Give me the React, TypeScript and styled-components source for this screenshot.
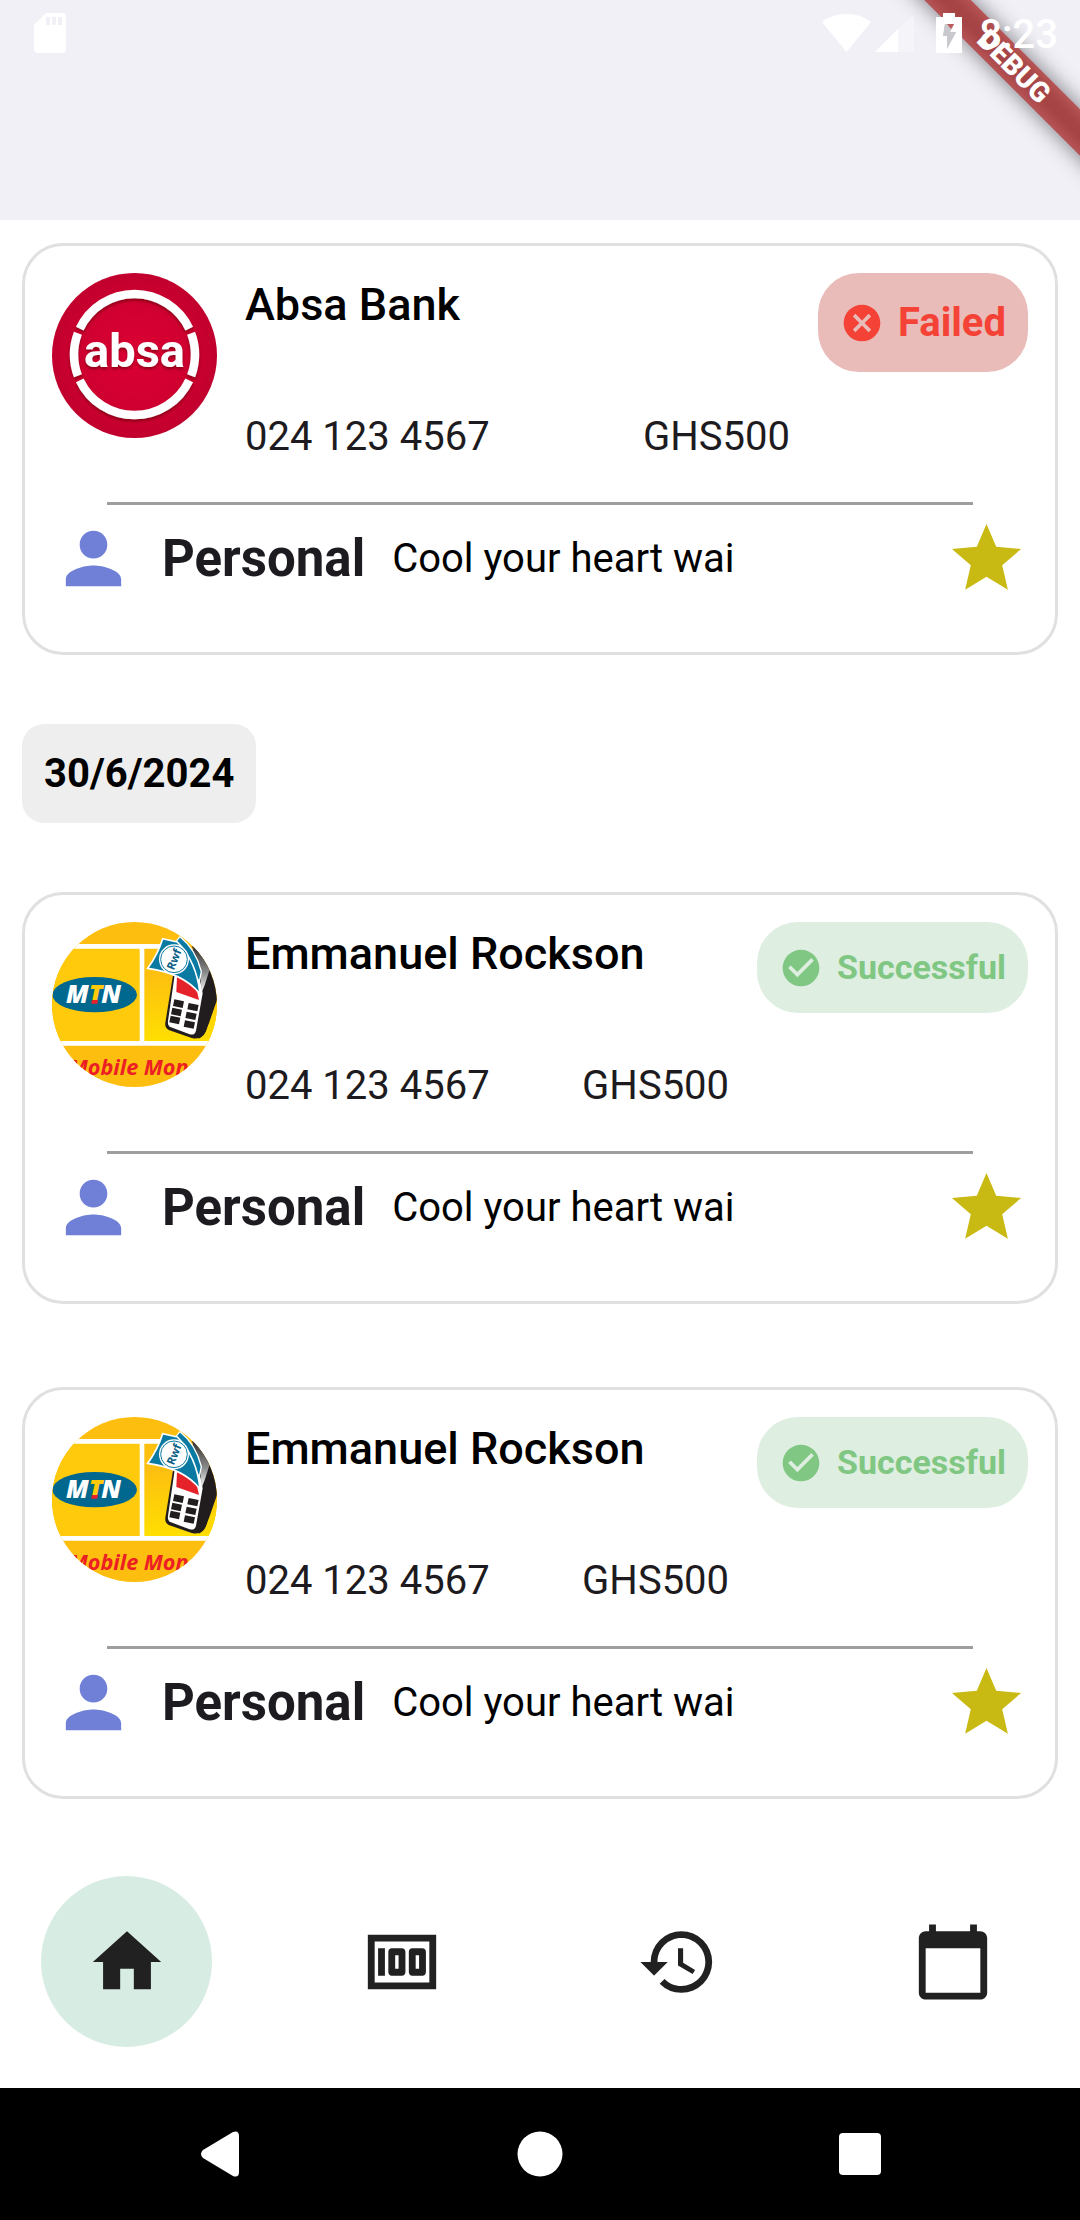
import React from 'react';
import styled, { createGlobalStyle } from 'styled-components';
import {
  MdCalendarToday,
  MdCancel,
  MdCheckCircle,
  MdHistory,
  MdHome,
  MdMoney,
  MdPerson,
  MdStar,
} from 'react-icons/md';

const GlobalStyle = createGlobalStyle`
  *, *::before, *::after { box-sizing: border-box; }
  body {
    margin: 0;
    background: #fff;
    color: #1d1b20;
    font-family: Roboto, "Noto Sans", sans-serif;
    font-size: 40px;
  }
  h2, p { margin: 0; }
  button {
    padding: 0;
    border: 0;
    background: none;
    color: inherit;
    font: inherit;
    cursor: pointer;
  }
  svg { display: block; flex: none; }
`;

const Screen = styled.div`
  display: flex;
  flex-direction: column;
  min-height: 100vh;
`;

const Header = styled.header`
  position: relative;
  height: 220px;
  overflow: hidden;
  background: #f1f0f7;
`;

const StatusBar = styled.div`
  position: relative;
  z-index: 1;
  display: flex;
  align-items: center;
  height: 66px;
  padding: 0 22px 0 34px;
  color: #fff;
`;

const StatusIcons = styled.div`
  display: flex;
  align-items: center;
  margin-left: auto;
`;

const Clock = styled.time`
  margin-left: 17px;
  padding-top: 4px;
  font-weight: 500;
  line-height: 46px;
`;

const DebugRibbon = styled.div`
  position: absolute;
  top: 50px;
  right: -84px;
  width: 300px;
  height: 33px;
  transform: rotate(45deg);
  color: #fff;
  font-size: 28px;
  font-weight: 900;
  line-height: 33px;
  text-align: center;

  &::before,
  &::after {
    content: '';
    position: absolute;
    inset: 0;
    z-index: -1;
  }
  &::before {
    background: rgba(0, 0, 0, 0.5);
    filter: blur(11px);
  }
  &::after {
    background: rgba(183, 28, 28, 0.63);
  }
`;

const History = styled.main`
  flex: 1;
  display: flex;
  flex-direction: column;
  padding: 23px 22px 36px;
`;

const DateChip = styled.p`
  align-self: flex-start;
  margin: 69px 0;
  padding: 0 22px;
  border-radius: 22px;
  background: #eee;
  color: #000;
  font-weight: 700;
  line-height: 99px;
`;

const CardGroup = styled.section`
  display: flex;
  flex-direction: column;
  gap: 83px;
`;

const Card = styled.article`
  padding: 27px 27px 52px;
  border: 3px solid #e0e0e0;
  border-radius: 41px;
`;

const CardTop = styled.div`
  display: flex;
  align-items: flex-start;
  gap: 28px;
`;

const Details = styled.div`
  flex: 1;
  display: flex;
  flex-direction: column;
  gap: 72px;
`;

const Name = styled.h2`
  color: #000;
  font-size: 45px;
  font-weight: 500;
  line-height: 64px;
`;

const Payment = styled.div`
  display: flex;
  justify-content: space-between;
  line-height: 55px;
`;

const Badge = styled.div<{ $failed: boolean }>`
  display: flex;
  align-items: center;
  gap: 14px;
  padding: 0 22px;
  border-radius: 41px;
  background: ${(p) => (p.$failed ? '#e9bbb9' : '#deeee0')};
  color: ${(p) => (p.$failed ? '#f44336' : '#81c784')};
  font-size: ${(p) => (p.$failed ? '40px' : '34px')};
  font-weight: 700;
  line-height: ${(p) => (p.$failed ? '99px' : '91px')};
`;

const Divider = styled.hr`
  height: 3px;
  margin: 38px 55px 12px;
  border: 0;
  background: #9e9e9e;
`;

const CardBottom = styled.div`
  display: flex;
  align-items: center;
`;

const Category = styled.span`
  margin-left: 27px;
  font-size: 51px;
  font-weight: 700;
`;

const Note = styled.span`
  margin-left: 27px;
  color: #000;
`;

const StarButton = styled.button`
  margin-left: auto;
  color: #c9b913;
`;

const TabBar = styled.nav`
  display: flex;
  justify-content: space-between;
  padding: 41px;
`;

const Tab = styled.button<{ $active?: boolean }>`
  display: grid;
  place-items: center;
  width: 171px;
  height: 171px;
  border-radius: 50%;
  background: ${(p) => (p.$active ? '#d7ece2' : 'transparent')};
  color: #212121;
`;

const SystemBar = styled.nav`
  display: grid;
  grid-template-columns: repeat(3, 1fr);
  height: 132px;
  padding: 0 60px;
  background: #000;
`;

const SystemButton = styled.button`
  display: grid;
  place-items: center;
  color: #fff;
`;

const AbsaLogo = () => (
  <svg width="165" height="165" viewBox="0 0 165 165" role="img" aria-label="Absa">
    <defs>
      <radialGradient id="absaRed">
        <stop offset="0" stopColor="#dc0033" />
        <stop offset="0.65" stopColor="#cf0030" />
        <stop offset="1" stopColor="#c1002e" />
      </radialGradient>
      <filter id="absaShadow" x="-10%" y="-10%" width="120%" height="125%">
        <feDropShadow dx="0" dy="2" stdDeviation="1.5" floodColor="#500" floodOpacity="0.6" />
      </filter>
    </defs>
    <circle cx="82.5" cy="82.5" r="82.5" fill="url(#absaRed)" />
    <g filter="url(#absaShadow)">
      <circle
        cx="82.5"
        cy="81.5"
        r="60.5"
        fill="none"
        stroke="#fff"
        strokeWidth="8.5"
        pathLength="360"
        strokeDasharray="20.7 4.6 129.4 4.6 41.4 4.6 129.4 4.6 20.7 0"
      />
      <text x="82.5" y="94" textAnchor="middle" fill="#fff" fontFamily="Roboto, sans-serif" fontWeight="700" fontSize="47">
        absa
      </text>
    </g>
  </svg>
);

const MtnLogo = ({ id }: { id: string }) => (
  <svg width="165" height="165" viewBox="36 36 495 495" role="img" aria-label="MTN Mobile Money">
    <defs>
      <clipPath id={`${id}-clip`}>
        <circle cx="283.5" cy="283.5" r="247.5" />
      </clipPath>
      <linearGradient id={`${id}-cell`} x1="0" y1="0" x2="0" y2="1">
        <stop offset="0.3" stopColor="#fdc010" />
        <stop offset="1" stopColor="#ffe000" />
      </linearGradient>
      <linearGradient id={`${id}-slot`} x1="0" y1="0" x2="0" y2="1">
        <stop offset="0" stopColor="#333" />
        <stop offset="0.55" stopColor="#888" />
        <stop offset="1" stopColor="#fff" />
      </linearGradient>
    </defs>
    <g clipPath={`url(#${id}-clip)`}>
      <rect x="36" y="36" width="495" height="495" fill="#fdbe10" />
      <rect x="36" y="110" width="270" height="290" fill="#ffc90c" />
      <rect x="306" y="110" width="225" height="290" fill={`url(#${id}-cell)`} />
      <path d="M36 109H380M306 109V400M36 400H531" fill="none" stroke="#fff" strokeWidth="14" />
      <ellipse cx="164" cy="254" rx="127" ry="53" fill="#00678f" />
      <g fontFamily="'Open Sans', sans-serif" fontStyle="italic" fontWeight="800">
        <text x="78" y="280" fontSize="75" fill="#fff">M</text>
        <text x="146" y="280" fontSize="75" fill="#ffc90c">T</text>
        <text x="184" y="280" fontSize="75" fill="#fff">N</text>
      </g>
      <path d="M156 270H174L172 281H154Z" fill="#e8202a" />
      <text x="86" y="495" fontFamily="'Open Sans', sans-serif" fontStyle="italic" fontWeight="700" fontSize="65" fill="#ec2024">
        Mobile Mon
      </text>
      <path d="M400 190L376 338Q374 354 386 360L455 384Q488 392 498 365L531 270V175L470 105Z" fill="#211d1e" />
      <path d="M470 385L531 385V320L505 345Q495 385 470 387Z" fill="#ffd800" />
      <path d="M404 195L384 333Q382 348 393 352L449 373Q464 377 468 362L488 250L478 200Z" fill="#fff" />
      <path d="M411 200L409 246L477 270Q470 220 438 195Z" fill="#e5222a" />
      <path d="M472 112L515 160L494 226L484 250Q486 170 455 108Z" fill={`url(#${id}-slot)`} />
      <path
        d="M403 268l29 6-4 20-29-6zM397 293l29 6-4 20-29-6zM392 317l29 6-4 20-29-6zM446 279l30 6-4 19-30-6zM440 305l30 6-4 19-30-6zM435 331l30 6-4 19-30-6z"
        fill="#211d1e"
      />
      <path d="M405 98L420 80Q468 118 484 185L478 215Z" fill="#0b7aa3" stroke="#fff" strokeWidth="4" />
      <path d="M323 175Q354 132 368 86L412 96Q470 155 480 252Q432 190 323 175Z" fill="#0b7aa3" stroke="#fff" strokeWidth="5" />
      <circle cx="402" cy="148" r="45" fill="#fff" />
      <circle cx="402" cy="148" r="40" fill="#fff" stroke="#0b7aa3" strokeWidth="3" />
      <text
        x="402"
        y="160"
        transform="rotate(-68 402 148)"
        textAnchor="middle"
        fontFamily="'Open Sans', sans-serif"
        fontWeight="700"
        fontSize="34"
        fill="#0b5f86"
      >
        Rwf
      </text>
    </g>
  </svg>
);

const SdCardIcon = () => (
  <svg width="32" height="40" viewBox="0 0 32 40" aria-hidden="true">
    <path
      fill="currentColor"
      fillRule="evenodd"
      d="M12 0H28Q32 0 32 4V36Q32 40 28 40H4Q0 40 0 36V12ZM12 4V12H16V4ZM18 4V12H22V4ZM24 4V12H28V4Z"
    />
  </svg>
);

const WifiIcon = () => (
  <svg width="49" height="40" viewBox="0 0 49 40" aria-hidden="true">
    <path fill="currentColor" d="M0 9Q10 1 24.500 1T49 9L24.500 39Z" />
  </svg>
);

const SignalIcon = () => (
  <svg width="43" height="40" viewBox="0 0 43 40" aria-hidden="true">
    <path fill="currentColor" opacity="0.3" d="M4 39L43 1V39Z" />
    <path fill="currentColor" d="M4 39L27 16V39Z" />
  </svg>
);

const BatteryIcon = () => (
  <svg width="48" height="40" viewBox="-22 0 48 40" aria-hidden="true">
    <path
      fill="currentColor"
      fillRule="evenodd"
      d="M7 0H19V4H26V40H0V4H7ZM9 11L7 23H11V36L20 19H14L18 11Z"
    />
    <path fill="#c9c8cc" d="M9 11L7 23H11V36L20 19H14L18 11Z" />
    <path fill="#bd5a5d" d="M11 11H18L15 16Z" />
  </svg>
);

interface Transaction {
  id: string;
  name: string;
  bank: 'absa' | 'mtn';
  failed: boolean;
}

const absaTransaction: Transaction = { id: 'absa-1', name: 'Absa Bank', bank: 'absa', failed: true };
const mtnTransactions: Transaction[] = [
  { id: 'mtn-1', name: 'Emmanuel Rockson', bank: 'mtn', failed: false },
  { id: 'mtn-2', name: 'Emmanuel Rockson', bank: 'mtn', failed: false },
];

const TransactionCard = ({ item }: { item: Transaction }) => (
  <Card>
    <CardTop>
      {item.bank === 'absa' ? <AbsaLogo /> : <MtnLogo id={item.id} />}
      <Details>
        <Name>{item.name}</Name>
        <Payment>
          <span>024 123 4567</span>
          <span>GHS500</span>
        </Payment>
      </Details>
      <Badge $failed={item.failed}>
        {item.failed ? <MdCancel size={44} /> : <MdCheckCircle size={44} />}
        {item.failed ? 'Failed' : 'Successful'}
      </Badge>
    </CardTop>
    <Divider />
    <CardBottom>
      <MdPerson size={83} color="#7080d7" />
      <Category>Personal</Category>
      <Note>Cool your heart wai</Note>
      <StarButton type="button" aria-label="Favourite">
        <MdStar size={83} />
      </StarButton>
    </CardBottom>
  </Card>
);

export default function App() {
  return (
    <>
      <GlobalStyle />
      <Screen>
        <Header>
          <StatusBar>
            <SdCardIcon />
            <StatusIcons>
              <WifiIcon />
              <SignalIcon />
              <BatteryIcon />
              <Clock>8:23</Clock>
            </StatusIcons>
          </StatusBar>
          <DebugRibbon>DEBUG</DebugRibbon>
        </Header>
        <History>
          <TransactionCard item={absaTransaction} />
          <DateChip>30/6/2024</DateChip>
          <CardGroup>
            {mtnTransactions.map((item) => (
              <TransactionCard key={item.id} item={item} />
            ))}
          </CardGroup>
        </History>
        <TabBar aria-label="Main">
          <Tab type="button" aria-label="Home" $active>
            <MdHome size={82} />
          </Tab>
          <Tab type="button" aria-label="Payments">
            <MdMoney size={82} />
          </Tab>
          <Tab type="button" aria-label="History">
            <MdHistory size={82} />
          </Tab>
          <Tab type="button" aria-label="Calendar">
            <MdCalendarToday size={82} />
          </Tab>
        </TabBar>
        <SystemBar aria-label="System">
          <SystemButton type="button" aria-label="Back">
            <svg width="40" height="46" viewBox="0 0 40 46">
              <path fill="currentColor" d="M33 1Q39 -1 39 5V41Q39 47 33 45L3 27Q-1 23 3 19Z" />
            </svg>
          </SystemButton>
          <SystemButton type="button" aria-label="Home screen">
            <svg width="46" height="46" viewBox="0 0 46 46">
              <circle cx="23" cy="23" r="22.5" fill="currentColor" />
            </svg>
          </SystemButton>
          <SystemButton type="button" aria-label="Recent apps">
            <svg width="42" height="42" viewBox="0 0 42 42">
              <rect width="42" height="42" rx="4" fill="currentColor" />
            </svg>
          </SystemButton>
        </SystemBar>
      </Screen>
    </>
  );
}
